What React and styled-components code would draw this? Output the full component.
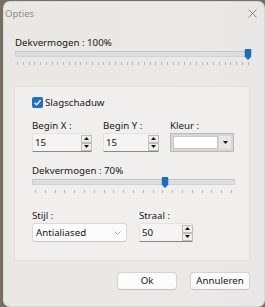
import React from "react";
import styled, { createGlobalStyle } from "styled-components";

const GlobalStyle = createGlobalStyle`
  html, body { margin: 0; padding: 0; }
  body {
    width: 265px;
    height: 307px;
    overflow: hidden;
    background: #776f61;
    font-family: "Noto Sans", "Open Sans", sans-serif;
    font-size: 9.7px;
    color: #161616;
  }
  * { box-sizing: border-box; }
`;

const Desktop = styled.div`
  width: 265px;
  height: 307px;
  padding: 1px 0 0 3px;
`;

const Window = styled.div`
  width: 262px;
  height: 306px;
  background: linear-gradient(90deg, #eae8e4 0%, #ebe9e6 80%, #e8e7e5 100%);
  border-radius: 7px;
  box-shadow: inset 0 0 0 1px rgba(0, 0, 0, 0.06);
  display: flex;
  flex-direction: column;
`;

const TitleBar = styled.div`
  height: 24px;
  display: flex;
  align-items: center;
  justify-content: space-between;
  padding: 0 8px 0 2px;
  color: #8d8d8d;
  font-size: 9.5px;
`;

const CloseIcon = styled.svg`
  display: block;
`;

const Body = styled.div`
  display: flex;
  flex-direction: column;
  padding: 0 0 0 12px;
`;

const Label = styled.div`
  line-height: 13px;
  height: 13px;
  white-space: nowrap;
  margin-top: ${(p) => p.$top || 0}px;
  margin-bottom: ${(p) => p.$bottom || 0}px;
`;

const SliderBox = styled.div`
  position: relative;
  width: ${(p) => p.$w}px;
  height: 17px;
`;

const Track = styled.div`
  position: absolute;
  left: 0;
  right: 0;
  top: 2px;
  height: 6px;
  background: #dcdedf;
  border: 1px solid #cfd2d4;
  border-top-color: #c4c7ca;
`;

const Rail = styled.div`
  position: absolute;
  left: ${(p) => p.$l}px;
  right: ${(p) => p.$r}px;
  top: 0;
  height: 17px;
`;

const Thumb = styled.svg`
  position: absolute;
  top: 0;
  transform: translateX(-50%);
  display: block;
`;

const Ticks = styled.div`
  position: absolute;
  left: 0;
  right: 0;
  top: 13px;
  display: flex;
  justify-content: space-between;
`;

const Tick = styled.span`
  width: 1px;
  height: 3px;
  background: #b4b4b4;
`;

const Group = styled.div`
  margin-top: 21px;
  width: 234px;
  height: 173px;
  background: #f0efed;
  box-shadow: 0 0 0 1px rgba(0, 0, 0, 0.03);
  padding: 10px 0 0 17px;
  display: flex;
  flex-direction: column;
`;

const CheckRow = styled.label`
  display: flex;
  align-items: center;
  gap: 2px;
  height: 11px;
  line-height: 11px;
`;

const CheckBox = styled.span`
  width: 11px;
  height: 11px;
  border-radius: 2px;
  background: #1f6fbf;
  display: flex;
  align-items: center;
  justify-content: center;
`;

const FieldRow = styled.div`
  display: grid;
  grid-template-columns: ${(p) => p.$cols};
  column-gap: ${(p) => p.$gap}px;
  margin-top: ${(p) => p.$top}px;
`;

const Field = styled.div`
  display: flex;
  flex-direction: column;
`;

const SpinBox = styled.div`
  height: 19px;
  display: flex;
  align-items: center;
  background: #f5f4f2;
  border: 1px solid #e3e2e0;
  border-bottom: 1px solid #888888;
  border-radius: 2px 2px 0 0;
`;

const SpinValue = styled.span`
  flex: 1;
  padding-left: 2px;
  line-height: 13px;
`;

const SpinButtons = styled.div`
  display: flex;
  flex-direction: column;
  width: 11px;
  margin-right: -1px;
`;

const SpinBtn = styled.div`
  height: 8px;
  background: #eeeeee;
  border: 1px solid #bdbdbd;
  display: flex;
  align-items: center;
  justify-content: center;
`;

const ColorCombo = styled.div`
  height: 19px;
  display: flex;
  border: 1px solid #b9b9b9;
  background: #d6d6d6;
  padding: 2px;
  gap: 1px;
`;

const Swatch = styled.div`
  flex: 1;
  background: #ffffff;
  border: 1px solid #c8c8c8;
`;

const DropBtn = styled.div`
  width: 12px;
  background: #e7e7e7;
  display: flex;
  align-items: center;
  justify-content: center;
`;

const Select = styled.div`
  height: 19px;
  display: flex;
  align-items: center;
  justify-content: space-between;
  background: #fbfbfb;
  border: 1px solid #dadada;
  border-bottom-color: #c6c6c6;
  border-radius: 3px;
  padding: 0 5px 0 3px;
`;

const ButtonRow = styled.div`
  display: flex;
  justify-content: flex-end;
  gap: 13px;
  margin-top: 12px;
  padding-right: 15px;
`;

const Button = styled.button`
  width: 60px;
  height: 18px;
  padding: 0;
  font: inherit;
  color: #161616;
  background: #fbfbfb;
  border: 1px solid #d4d4d4;
  border-bottom-color: #c2c2c2;
  border-radius: 4px;
  line-height: 14px;
`;

const Up = () => (
  <svg width="5" height="3" viewBox="0 0 5 3">
    <path d="M0 3 L2.5 0 L5 3 Z" fill="#111" />
  </svg>
);
const Down = () => (
  <svg width="5" height="3" viewBox="0 0 5 3">
    <path d="M0 0 L5 0 L2.5 3 Z" fill="#111" />
  </svg>
);

function Slider({ width, pos, ticks, inset }) {
  return (
    <SliderBox $w={width}>
      <Track />
      <Rail $l={inset[0]} $r={inset[1]}>
        <Ticks>
          {Array.from({ length: ticks }).map((_, i) => (
            <Tick key={i} />
          ))}
        </Ticks>
        <Thumb
          width="7"
          height="11"
          viewBox="0 0 7 11"
          style={{ left: `${pos * 100}%` }}
        >
          <path
            d="M1 0 H6 Q7 0 7 1 V7.5 L3.5 11 L0 7.5 V1 Q0 0 1 0 Z"
            fill="#1c6dc2"
          />
        </Thumb>
      </Rail>
    </SliderBox>
  );
}

function Spin({ value }) {
  return (
    <SpinBox>
      <SpinValue>{value}</SpinValue>
      <SpinButtons>
        <SpinBtn>
          <Up />
        </SpinBtn>
        <SpinBtn>
          <Down />
        </SpinBtn>
      </SpinButtons>
    </SpinBox>
  );
}

export default function App() {
  return (
    <>
      <GlobalStyle />
      <Desktop>
        <Window>
          <TitleBar>
            <span>Opties</span>
            <CloseIcon width="9" height="9" viewBox="0 0 9 9">
              <path
                d="M0.5 0.5 L8.5 8.5 M8.5 0.5 L0.5 8.5"
                stroke="#8a8a8a"
                strokeWidth="1"
              />
            </CloseIcon>
          </TitleBar>
          <Body>
            <Label $top={11}>Dekvermogen : 100%</Label>
            <Slider width={234} pos={0.995} ticks={41} inset={[2, 0]} />
            <Group>
              <CheckRow>
                <CheckBox>
                  <svg width="9" height="9" viewBox="0 0 9 9">
                    <path
                      d="M1.6 4.8 L3.6 6.8 L7.6 2.3"
                      stroke="#fff"
                      strokeWidth="1.3"
                      fill="none"
                    />
                  </svg>
                </CheckBox>
                <span>Slagschaduw</span>
              </CheckRow>
              <FieldRow $cols="60px 56px 64px" $gap={11} $top={11}>
                <Field>
                  <Label $bottom={1}>Begin X :</Label>
                  <Spin value="15" />
                </Field>
                <Field>
                  <Label $bottom={1}>Begin Y :</Label>
                  <Spin value="15" />
                </Field>
                <Field>
                  <Label $bottom={1}>Kleur :</Label>
                  <ColorCombo>
                    <Swatch />
                    <DropBtn>
                      <Down />
                    </DropBtn>
                  </ColorCombo>
                </Field>
              </FieldRow>
              <Label $top={12}>Dekvermogen : 70%</Label>
              <Slider width={203} pos={0.662} ticks={21} inset={[3, 3]} />
              <FieldRow $cols="95px 54px" $gap={12} $top={15}>
                <Field>
                  <Label $bottom={1}>Stijl :</Label>
                  <Select>
                    <span>Antialiased</span>
                    <svg width="7" height="4" viewBox="0 0 7 4">
                      <path
                        d="M0.5 0.5 L3.5 3.5 L6.5 0.5"
                        stroke="#9a9a9a"
                        strokeWidth="0.9"
                        fill="none"
                      />
                    </svg>
                  </Select>
                </Field>
                <Field>
                  <Label $bottom={1}>Straal :</Label>
                  <Spin value="50" />
                </Field>
              </FieldRow>
            </Group>
            <ButtonRow>
              <Button>Ok</Button>
              <Button>Annuleren</Button>
            </ButtonRow>
          </Body>
        </Window>
      </Desktop>
    </>
  );
}
